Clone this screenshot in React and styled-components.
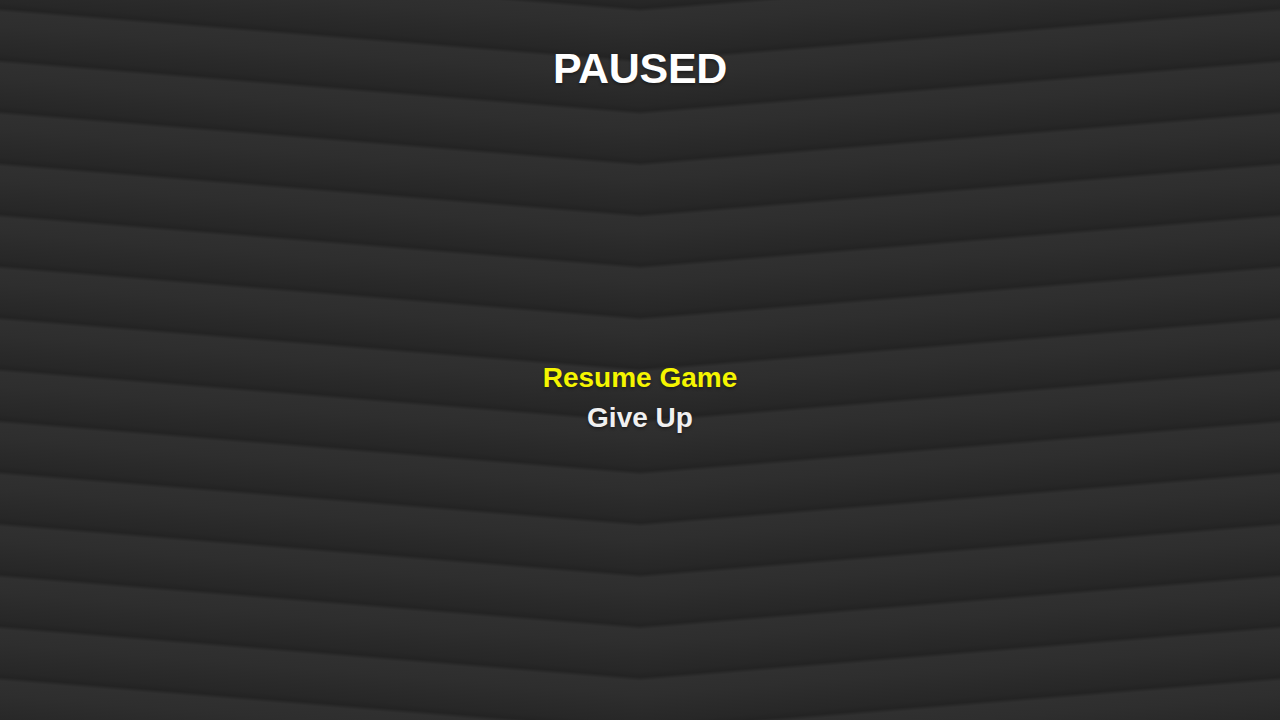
import styled, { createGlobalStyle } from "styled-components";

const menuItems = [
  { id: 1, title: "Resume Game", active: true },
  { id: 2, title: "Give Up", active: false },
];

const GlobalStyle = createGlobalStyle`
  html, body {
    margin: 0;
    padding: 0;
    background: #2a2a2a;
  }
`;

export default function App() {
  return (
    <>
      <GlobalStyle />
      <Screen>
        <Title>PAUSED</Title>
        <Menu>
          {menuItems.map((item) => (
            <MenuItem key={item.id} active={item.active}>
              {item.title}
            </MenuItem>
          ))}
        </Menu>
      </Screen>
    </>
  );
}

const Screen = styled.div`
  display: flex;
  flex-direction: column;
  align-items: center;
  width: 100%;
  height: 100vh;
  overflow: hidden;
  font-family: "Liberation Sans", Arial, sans-serif;
  background-color: #2a2a2a;
  background-image: repeating-linear-gradient(
      184.6deg,
      #232323 8px,
      #303030 12px,
      #2e2e2e 26px,
      #272727 54px,
      #232323 59.3px
    ),
    repeating-linear-gradient(
      175.4deg,
      #232323 8px,
      #303030 12px,
      #2e2e2e 26px,
      #272727 54px,
      #232323 59.3px
    );
  background-size: 50% 100%;
  background-position: left top, right top;
  background-repeat: no-repeat;
`;

const Title = styled.h1`
  margin: 0;
  padding-top: 46px;
  font-size: 43px;
  line-height: 44px;
  font-weight: 700;
  letter-spacing: -0.3px;
  color: #ffffff;
  text-shadow: 0 2px 3px rgba(0, 0, 0, 0.35);
`;

const Menu = styled.ul`
  display: flex;
  flex-direction: column;
  align-items: center;
  list-style: none;
  margin: 268px 0 0;
  padding: 0;
`;

const MenuItem = styled.li`
  font-size: 28px;
  line-height: 40px;
  font-weight: 700;
  color: ${({ active }) => (active ? "#f5f500" : "#f0f0f0")};
  text-shadow: 0 2px 3px rgba(0, 0, 0, 0.35);
  cursor: pointer;
`;
